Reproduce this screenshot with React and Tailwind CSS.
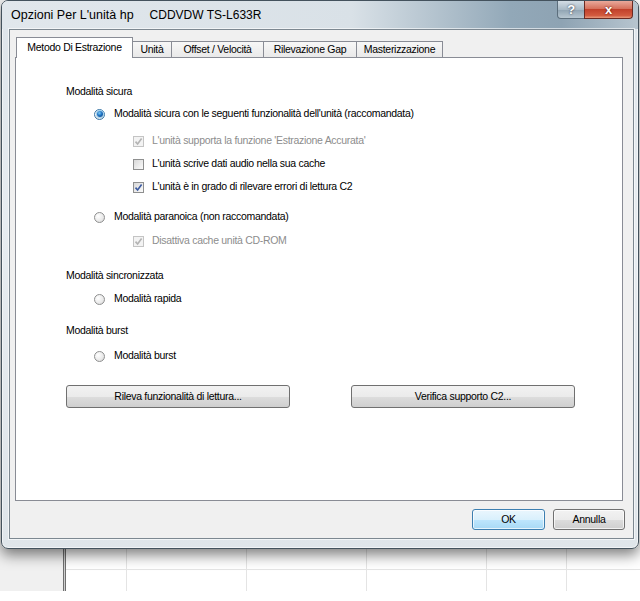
import React from 'react';

const ui = "font-['Liberation_Sans',Arial,sans-serif] text-[10.5px] tracking-[-0.3px] text-black";

function Radio({ checked }) {
  return (
    <span
      className={`flex h-[11px] w-[11px] shrink-0 items-center justify-center rounded-full border ${
        checked ? 'border-[#3a77a8]' : 'border-[#8e8f8f]'
      } bg-[radial-gradient(circle_at_35%_35%,#ffffff_0%,#ebebeb_55%,#d2d2d2_100%)]`}
    >
      {checked && (
        <span className="h-[6px] w-[6px] rounded-full bg-[radial-gradient(circle_at_40%_35%,#7fcdf7_0%,#1f73c4_45%,#0a3f7e_100%)] shadow-[0_0_0_1px_#9fd0ee]" />
      )}
    </span>
  );
}

function Check({ checked, disabled }) {
  return (
    <span
      className={`flex h-[11px] w-[11px] shrink-0 items-center justify-center border ${
        disabled
          ? 'border-[#c4c4c4] bg-[#f3f3f3]'
          : 'border-[#8e8f8f] bg-[linear-gradient(135deg,#d8d8d8,#fbfbfb)]'
      }`}
    >
      {checked && (
        <svg width="9" height="9" viewBox="0 0 9 9">
          <path
            d="M1.5 4.6 L3.6 7 L7.6 1.6"
            fill="none"
            stroke={disabled ? '#b3b3b3' : '#3b5aa0'}
            strokeWidth="1.6"
          />
        </svg>
      )}
    </span>
  );
}

function RadioRow({ mt, checked, label }) {
  return (
    <div className={`flex h-[16px] items-center gap-[9px] pl-[28px] ${mt}`}>
      <Radio checked={checked} />
      <span>{label}</span>
    </div>
  );
}

function CheckRow({ mt, checked, disabled, label }) {
  return (
    <div className={`flex h-[16px] items-center gap-[8px] pl-[67px] ${mt}`}>
      <Check checked={checked} disabled={disabled} />
      <span className={disabled ? 'text-[#8d8d8d]' : ''}>{label}</span>
    </div>
  );
}

const tabs = [
  { label: 'Unità', w: 'w-[40px]' },
  { label: 'Offset / Velocità', w: 'w-[93px]' },
  { label: 'Rilevazione Gap', w: 'w-[94px]' },
  { label: 'Masterizzazione', w: 'w-[87px]' },
];

export default function App() {
  return (
    <div className={`relative h-[601px] w-[640px] overflow-hidden bg-white ${ui}`}>
      {/* desktop behind the dialog */}
      <div className="absolute inset-x-0 top-0 flex h-[591px]">
        <div className="w-[63px] bg-[#f0f0f0]" />
        <div className="w-[3px] border-x border-[#6f6f6f] bg-[#cfcfcf]" />
        <div className="flex flex-1">
          {['w-[60px]', 'w-[120px]', 'w-[120px]', 'w-[120px]', 'w-[80px]', 'flex-1'].map((w, i) => (
            <div key={i} className={`${w} ${i > 0 ? 'border-l border-[#e4e4e4]' : ''}`}>
              <div className="h-[570px] border-b border-[#e4e4e4]" />
            </div>
          ))}
        </div>
      </div>

      {/* dialog window */}
      <div className="relative z-10 ml-[1px] flex h-[549px] w-[638px] flex-col rounded-[7px] border border-[#44525d] bg-[linear-gradient(to_bottom,#dde4ea,#e7ecf0_40%,#dfe5ea)] shadow-[inset_0_0_0_1px_rgba(255,255,255,0.55),0_6px_14px_rgba(0,0,0,0.5)]">
        <div className="flex h-[28px] shrink-0 items-start justify-between rounded-t-[6px] bg-[linear-gradient(to_right,#e1e7ec_0%,#d9e1e7_55%,#92a8b8_80%,#8ea3b3_88%,#b7c5cf_100%)]">
          <div className="flex h-[28px] items-center pl-[9px] text-[12.5px] tracking-normal text-black">
            <span>Opzioni Per L'unità hp</span>
            <span className="ml-[16px] text-[12px]">CDDVDW TS-L633R</span>
          </div>
          <div className="mr-[5px] flex">
            <div className="flex h-[18px] w-[28px] items-center justify-center rounded-bl-[4px] border border-t-0 border-[#5c6e7c] bg-[linear-gradient(to_bottom,#d3dde5,#a9bac6_50%,#8fa3b2_51%,#b8c7d1)] text-[13px] font-bold text-white [text-shadow:0_0_2px_#223]">
              ?
            </div>
            <div className="-ml-px flex h-[18px] w-[49px] items-center justify-center rounded-br-[4px] border border-t-0 border-[#6b2a22] bg-[linear-gradient(to_bottom,#e9a99b,#d6715c_45%,#c2412b_50%,#d25a3f_85%,#e99a7c)] text-[13px] font-bold text-white [text-shadow:0_0_2px_#400]">
              x
            </div>
          </div>
        </div>

        {/* client area */}
        <div className="ml-[7px] mr-[4px] flex h-[510px] flex-col border border-[#7d8891] bg-[#f0f0f0] px-[5px] pt-[7px] shadow-[0_0_0_1px_rgba(255,255,255,0.6)]">
          <div className="flex h-[20px] items-end pl-px">
            <div className="relative z-10 -mb-px flex h-[21px] w-[117px] items-center justify-center border border-b-0 border-[#898c95] bg-white">
              Metodo Di Estrazione
            </div>
            {tabs.map((t) => (
              <div
                key={t.label}
                className={`-ml-px flex h-[16px] ${t.w} items-center justify-center border border-b-0 border-[#898c95] bg-[linear-gradient(to_bottom,#f7f7f7,#e9e9e9)] pt-px`}
              >
                {t.label}
              </div>
            ))}
          </div>

          <div className="flex h-[444px] w-[608px] flex-col border border-[#898c95] bg-white pl-[50px]">
            <div className="mt-[26px] flex h-[16px] items-center">Modalità sicura</div>
            <RadioRow mt="mt-[6px]" checked label="Modalità sicura con le seguenti funzionalità dell'unità (raccomandata)" />
            <CheckRow mt="mt-[11px]" checked disabled label="L'unità supporta la funzione 'Estrazione Accurata'" />
            <CheckRow mt="mt-[7px]" label="L'unità scrive dati audio nella sua cache" />
            <CheckRow mt="mt-[7px]" checked label="L'unità è in grado di rilevare errori di lettura C2" />
            <RadioRow mt="mt-[14px]" label="Modalità paranoica (non raccomandata)" />
            <CheckRow mt="mt-[8px]" checked disabled label="Disattiva cache unità CD-ROM" />
            <div className="mt-[19px] flex h-[16px] items-center">Modalità sincronizzata</div>
            <RadioRow mt="mt-[7px]" label="Modalità rapida" />
            <div className="mt-[16px] flex h-[16px] items-center">Modalità burst</div>
            <RadioRow mt="mt-[9px]" label="Modalità burst" />
            <div className="mt-[21px] flex gap-[61px]">
              <button className="flex h-[23px] w-[224px] items-center justify-center rounded-[3px] border border-[#707070] bg-[linear-gradient(to_bottom,#f2f2f2_0%,#ebebeb_50%,#dddddd_51%,#cfcfcf_100%)]">
                Rileva funzionalità di lettura...
              </button>
              <button className="flex h-[23px] w-[224px] items-center justify-center rounded-[3px] border border-[#707070] bg-[linear-gradient(to_bottom,#f2f2f2_0%,#ebebeb_50%,#dddddd_51%,#cfcfcf_100%)]">
                Verifica supporto C2...
              </button>
            </div>
          </div>

          <div className="mt-[8px] flex justify-end gap-[8px] pr-[3px]">
            <button className="flex h-[21px] w-[73px] items-center justify-center rounded-[3px] border border-[#3c7fb1] bg-[linear-gradient(to_bottom,#eaf6fd_0%,#d9f0fc_50%,#bee6fd_51%,#a7d9f5_100%)] shadow-[inset_0_0_0_1px_rgba(255,255,255,0.7)]">
              OK
            </button>
            <button className="flex h-[21px] w-[72px] items-center justify-center rounded-[3px] border border-[#707070] bg-[linear-gradient(to_bottom,#f2f2f2_0%,#ebebeb_50%,#dddddd_51%,#cfcfcf_100%)] shadow-[inset_0_0_0_1px_rgba(255,255,255,0.7)]">
              Annulla
            </button>
          </div>
        </div>
      </div>
    </div>
  );
}
